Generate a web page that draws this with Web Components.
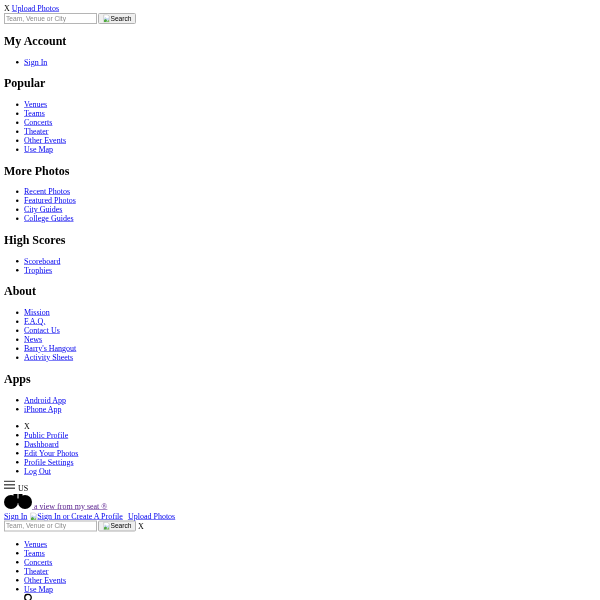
<!DOCTYPE html>
<html lang="en">
<head>
<meta charset="utf-8">
<title>A View From My Seat</title>
<style>
  html, body { margin: 0; background: #fff; overflow: hidden; }
  body { height: 600px; font-family: "Liberation Serif", serif; color: #000; }
  a { color: #00e; }
</style>
</head>
<body>
<half-page>
  <div>X <a href="#">Upload Photos</a></div>
  <search-bar></search-bar>

  <nav-section title="My Account"><a href="#">Sign In</a></nav-section>
  <nav-section title="Popular">
    <a href="#">Venues</a><a href="#">Teams</a><a href="#">Concerts</a>
    <a href="#">Theater</a><a href="#">Other Events</a><a href="#">Use Map</a>
  </nav-section>
  <nav-section title="More Photos">
    <a href="#">Recent Photos</a><a href="#">Featured Photos</a>
    <a href="#">City Guides</a><a href="#">College Guides</a>
  </nav-section>
  <nav-section title="High Scores"><a href="#">Scoreboard</a><a href="#">Trophies</a></nav-section>
  <nav-section title="About">
    <a href="#">Mission</a><a href="#">F.A.Q.</a><a href="#">Contact Us</a>
    <a href="#">News</a><a href="#">Barry's Hangout</a><a href="#">Activity Sheets</a>
  </nav-section>
  <nav-section title="Apps"><a href="#">Android App</a><a href="#">iPhone App</a></nav-section>

  <nav-section>
    <span>X</span><a href="#">Public Profile</a><a href="#">Dashboard</a>
    <a href="#">Edit Your Photos</a><a href="#">Profile Settings</a><a href="#">Log Out</a>
  </nav-section>

  <site-header></site-header>

  <nav-section>
    <a href="#">Venues</a><a href="#">Teams</a><a href="#">Concerts</a>
    <a href="#">Theater</a><a href="#">Other Events</a><a href="#">Use Map</a>
  </nav-section>

  <ring-icon></ring-icon>
</half-page>

<script>
  // the reference is an unstyled page shot at half size, blur stands in for the downsampling
  class HalfPage extends HTMLElement {
    constructor() {
      super();
      this.attachShadow({ mode: 'open' });
      this.shadowRoot.innerHTML = `
        <style>
          :host {
            display: block;
            width: 600px;
            height: 600px;
            overflow: hidden;
          }
          .sheet {
            box-sizing: border-box;
            width: 1190px;
            height: 1200px;
            padding: 8px;
            overflow: hidden;
            transform: scale(.5);
            transform-origin: 0 0;
            filter: blur(.7px);
          }
        </style>
        <div class="sheet"><slot></slot></div>`;
    }
  }
  customElements.define('half-page', HalfPage);

  // broken image placeholder, same one the browser draws when a src fails
  class BrokenImage extends HTMLElement {
    constructor() {
      super();
      this.attachShadow({ mode: 'open' });
      this.shadowRoot.innerHTML = `
        <style>
          :host { display: inline; }
          svg { width: 16px; height: 16px; vertical-align: -4px; }
        </style>
        <svg viewBox="0 0 16 16">
          <path d="M2.5 .5H10L13.5 4V15.5H2.5Z" fill="#fff" stroke="#a9a9a9"/>
          <path d="M3 8L6 5L9 8L13 6V10L8 15H3Z" fill="#c5d8f3"/>
          <path d="M3 15V11L6 9L9 11L8 15Z" fill="#4fa83d"/>
          <path d="M8 15L13 10V15Z" fill="#7fc05d"/>
        </svg><slot></slot>`;
    }
  }
  customElements.define('broken-image', BrokenImage);

  class SearchBar extends HTMLElement {
    constructor() {
      super();
      this.attachShadow({ mode: 'open' });
      this.shadowRoot.innerHTML = `
        <style>
          :host { display: block; height: 22px; line-height: 22px; }
          input, button {
            box-sizing: border-box;
            height: 22px;
            margin: 0;
            font: 13.33px "Liberation Sans", Arial, sans-serif;
            vertical-align: top;
          }
          input {
            width: 186px;
            padding: 1px 2px;
            border: 2px solid #b5b5b5;
            background: #fff;
          }
          input::placeholder { color: #8a8a8a; opacity: 1; }
          button {
            width: 76px;
            margin-left: 2px;
            padding: 0 6px;
            border: 2px solid #b0b0b0;
            border-radius: 3px;
            background: #efefef;
            color: #000;
            white-space: nowrap;
          }
        </style>
        <input type="text" placeholder="Team, Venue or City"><button type="button"><broken-image></broken-image>Search</button><slot></slot>`;
    }
  }
  customElements.define('search-bar', SearchBar);

  // heading (optional) + bullet list, each light dom child becomes an item
  class NavSection extends HTMLElement {
    constructor() {
      super();
      this.attachShadow({ mode: 'open' });
    }

    connectedCallback() {
      const title = this.getAttribute('title');
      const kids = [...this.children];
      kids.forEach((el, i) => el.setAttribute('slot', 'item' + i));
      this.shadowRoot.innerHTML = `
        <style>
          :host { display: block; }
        </style>
        ${title ? `<h2>${title}</h2>` : ''}
        <ul>${kids.map((el, i) => `<li><slot name="item${i}"></slot></li>`).join('')}</ul>`;
    }
  }
  customElements.define('nav-section', NavSection);

  class SiteHeader extends HTMLElement {
    constructor() {
      super();
      this.attachShadow({ mode: 'open' });
      this.shadowRoot.innerHTML = `
        <style>
          :host { display: block; }
          a { color: #00e; }
          .seen { color: #551a8b; }
          .menu svg { width: 22px; height: 18px; margin: -8px 6px 0 0; vertical-align: 2px; }
          .logo { white-space: nowrap; }
          .logo svg { width: 56px; height: 30px; margin-top: 3px; }
          .links { margin-top: 1px; white-space: nowrap; }
          .gap { margin-left: 6px; }
        </style>
        <div class="menu">
          <svg viewBox="0 0 22 18"><path d="M0 0H22V3H0ZM0 7H22V10H0ZM0 14H22V17H0Z" fill="#555"/></svg>US
        </div>
        <div class="logo">
          <a class="seen" href="#"><svg viewBox="0 0 56 30">
            <circle cx="14" cy="16" r="14"/><circle cx="42" cy="16" r="14"/>
            <path d="M19 0H27V9H29V0H37V12H30V18H26V12H19Z"/>
          </svg> a view from my seat ®</a>
        </div>
        <div class="links">
          <a href="#">Sign In</a>
          <a href="#"><broken-image>Sign In or Create A Profile</broken-image></a>
          <a class="gap" href="#">Upload Photos</a>
        </div>
        <search-bar> X</search-bar>`;
    }
  }
  customElements.define('site-header', SiteHeader);

  class RingIcon extends HTMLElement {
    constructor() {
      super();
      this.attachShadow({ mode: 'open' });
      this.shadowRoot.innerHTML = `
        <style>
          :host { display: block; padding-left: 40px; height: 16px; margin-top: -16px; }
          svg { display: block; width: 16px; height: 16px; }
        </style>
        <svg viewBox="0 0 16 16"><circle cx="8" cy="8" r="6.5" fill="none" stroke="#000" stroke-width="2.6"/></svg>`;
    }
  }
  customElements.define('ring-icon', RingIcon);
</script>
</body>
</html>
